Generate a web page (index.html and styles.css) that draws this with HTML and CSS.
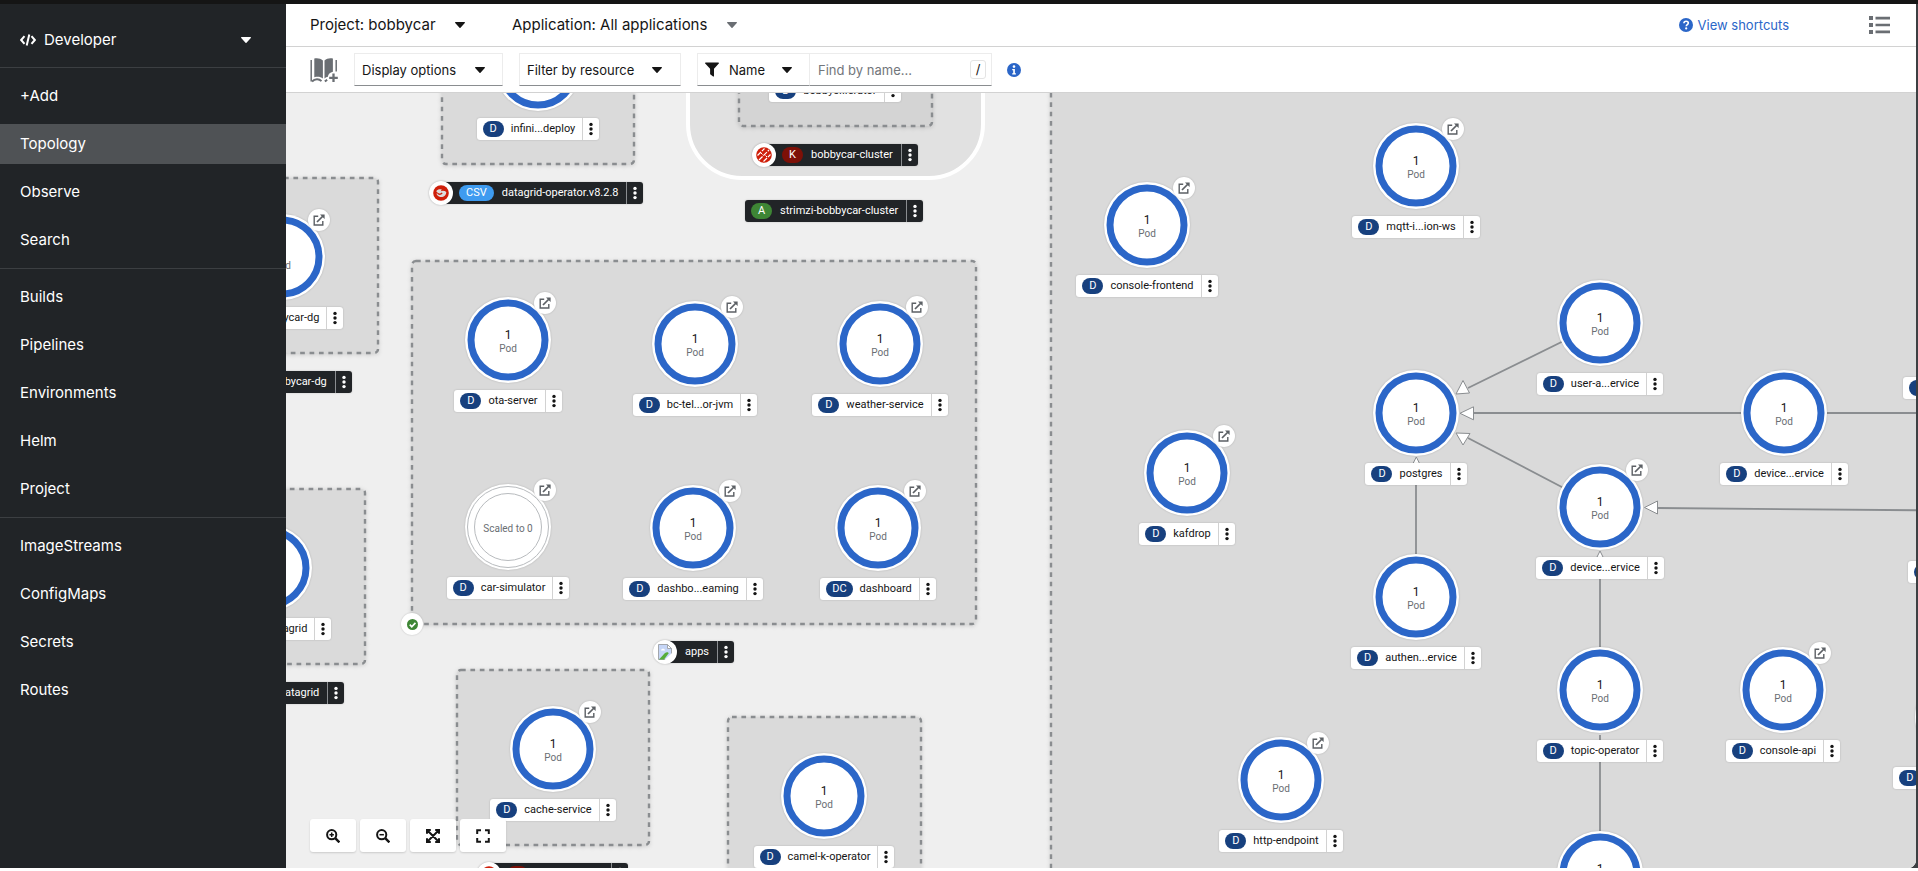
FILE: index.html
```html
<!DOCTYPE html>
<html lang="en">
<head>
<meta charset="utf-8">
<title>Topology</title>
<link rel="stylesheet" href="styles.css">
</head>
<body>
<svg class="sprite" aria-hidden="true">
  <symbol id="i-caret" viewBox="0 0 10 6"><path d="M.6 0h8.8c.5 0 .8.6.4 1L5.5 5.7a.7.7 0 0 1-1 0L.2 1C-.2.6.1 0 .6 0z"/></symbol>
  <symbol id="i-open" viewBox="0 0 12 12"><path d="M5.200 2.200H1.200v8.800h8.600V7" fill="none" stroke="currentColor" stroke-width="1.400"/><path d="M4 8l6-6" stroke="currentColor" stroke-width="1.700"/><path d="M7 .4h4.600V5z"/></symbol>
  <symbol id="i-kebab" viewBox="0 0 4 14"><circle cx="2" cy="2.400" r="1.700"/><circle cx="2" cy="7" r="1.700"/><circle cx="2" cy="11.600" r="1.700"/></symbol>
</svg>
<div class="titlebar"></div>
<div class="window">
  <nav class="sidebar" aria-label="Main">
    <div class="perspective">
      <svg class="perspective-icon" viewBox="0 0 16 12"><path d="M4.500 2.200L1.200 6l3.300 3.800M11.500 2.200L14.800 6l-3.300 3.800M9.300.6L6.700 11.400" fill="none" stroke="currentColor" stroke-width="2"/></svg>
      <select aria-label="Perspective"><option>Developer</option></select>
      <svg class="caret"><use href="#i-caret"/></svg>
    </div>
    <div class="nav-group">
      <a href="#add">+Add</a>
      <a href="#topology" class="current" aria-current="page">Topology</a>
      <a href="#observe">Observe</a>
      <a href="#search">Search</a>
    </div>
    <div class="nav-group">
      <a href="#builds">Builds</a>
      <a href="#pipelines">Pipelines</a>
      <a href="#environments">Environments</a>
      <a href="#helm">Helm</a>
      <a href="#project">Project</a>
    </div>
    <div class="nav-group">
      <a href="#imagestreams">ImageStreams</a>
      <a href="#configmaps">ConfigMaps</a>
      <a href="#secrets">Secrets</a>
      <a href="#routes">Routes</a>
    </div>
  </nav>
  <main class="content">
    <header class="context-bar">
      <div class="context-picker">
        <select aria-label="Project"><option>Project: bobbycar</option></select>
        <svg class="caret"><use href="#i-caret"/></svg>
      </div>
      <div class="context-picker muted">
        <select aria-label="Application"><option>Application: All applications</option></select>
        <svg class="caret"><use href="#i-caret"/></svg>
      </div>
      <a class="shortcuts" href="#shortcuts">
        <svg viewBox="0 0 14 14"><circle cx="7" cy="7" r="7" fill="currentColor"/><path d="M4.900 5.300C5 3.900 5.900 3.200 7.100 3.200c1.300 0 2.200.8 2.200 1.900 0 1.600-2 1.600-2 3.100" fill="none" stroke="#fff" stroke-width="1.600"/><circle cx="7.200" cy="10.400" r="1.100" fill="#fff"/></svg>
        View shortcuts</a>
      <button class="list-view" aria-label="List view">
        <svg viewBox="0 0 21 18"><path d="M0 0h4v4H0zM0 7h4v4H0zM0 14h4v4H0zM6.500 .8H21v2.600H6.500zM6.500 7.700H21v2.600H6.500zM6.500 14.600H21v2.600H6.500z"/></svg>
      </button>
    </header>
    <div class="filter-bar">
      <button class="catalog" aria-label="Quick search">
        <svg viewBox="0 0 28 26"><path d="M4.300 1.500C7.500.9 10.600 1.400 12.900 3.400v18C10.700 19.700 7.500 19.300 4.300 20.200zM22.900 1.500C19.700.9 16.700 1.400 14.500 3.400v18c1-.8 2.200-1.300 3.400-1.600.2-2.300 2.100-4.600 5-5z"/><path d="M1.200 3v21.500M26.200 3v11.500" fill="none" stroke="currentColor" stroke-width="1.500"/><path d="M2 24.500c3-2.900 7-2.900 9.500-.4M14.800 24.400l2.400-1.500" fill="none" stroke="currentColor" stroke-width="2"/><path d="M23.500 16.500v8.600M19.200 20.800h8.600" stroke="currentColor" stroke-width="2.300"/></svg>
      </button>
      <button class="box display-options">Display options <svg class="caret"><use href="#i-caret"/></svg></button>
      <div class="box resource-filter">
        <select aria-label="Filter by resource"><option>Filter by resource</option></select>
        <svg class="caret"><use href="#i-caret"/></svg>
      </div>
      <div class="search-group">
        <div class="box name-filter">
          <svg class="funnel" viewBox="0 0 14 14"><path d="M.7 0h12.600c.6 0 .9.7.5 1.100L9 6.200v7.300c0 .5-.5.7-.9.400L5.500 12a.8.800 0 0 1-.4-.6V6.200L.2 1.100C-.2.7.1 0 .7 0z"/></svg>
          <select aria-label="Filter type"><option>Name</option></select>
          <svg class="caret"><use href="#i-caret"/></svg>
        </div>
        <div class="box search">
          <input type="text" placeholder="Find by name..." aria-label="Find by name">
          <kbd>/</kbd>
        </div>
      </div>
      <button class="info" aria-label="Search help">
        <svg viewBox="0 0 14 14"><circle cx="7" cy="7" r="7"/><circle cx="7" cy="3.600" r="1.300" fill="#fff"/><path d="M5.200 6h2.700v4.200h1v1.300H5.200v-1.300h1V7.300h-1z" fill="#fff"/></svg>
      </button>
    </div>
    <section class="topology" aria-label="Topology graph">
      <svg class="graph-shapes">
        <g transform="translate(-286 -93)">
          <rect class="app-group" x="688" y="-60" width="295" height="238" rx="54"/>
          <g class="group">
            <rect x="442" y="-20" width="192" height="184" rx="4"/>
            <rect class="nested" x="739" y="-20" width="193" height="146" rx="4"/>
            <rect x="186" y="178" width="192" height="175" rx="4"/>
            <rect x="173" y="489" width="192" height="175" rx="4"/>
            <rect x="412" y="261" width="564" height="363" rx="4"/>
            <rect x="457" y="670" width="192" height="175" rx="4"/>
            <rect x="728" y="717" width="193" height="200" rx="4"/>
            <rect x="1051" y="-20" width="1000" height="1000" rx="4"/>
          </g>
          <g class="edges">
            <path d="M1600 323L1468 388M1600 507L1468 438M1784 413H1473M1784 413H2000M1416 597V470M2000 511L1657 508M1600 690V564M1600 874V735"/>
            <path class="arrow" d="M1456 394l7-13.500 6.500 12.500zM1460 413.300l13.500-6.500v13zM1456 433l14 .5-7 11.500zM1644.500 507.500l13-6.500v13zM1416.300 457l6.500 13h-13zM1600 551l6.500 13h-13z"/>
          </g>
        </g>
      </svg>
      <div class="world" id="world"></div>
      <div class="zoom-controls">
        <button aria-label="Zoom in"><svg viewBox="0 0 14 14"><circle cx="5.700" cy="5.700" r="4.600"/><path d="M9.200 9.200l4.200 4.200" stroke-width="2.400"/><path d="M5.700 3.500v4.400M3.500 5.700h4.400" stroke-width="1.500"/></svg></button>
        <button aria-label="Zoom out"><svg viewBox="0 0 14 14"><circle cx="5.700" cy="5.700" r="4.600"/><path d="M9.200 9.200l4.200 4.200" stroke-width="2.400"/><path d="M3.500 5.700h4.400" stroke-width="1.500"/></svg></button>
        <button aria-label="Fit to screen"><svg viewBox="0 0 14 14"><path d="M2 2l10 10M12 2L2 12M1 4.800V1h3.800M9.200 1H13v3.800M13 9.200V13H9.200M4.800 13H1V9.200"/></svg></button>
        <button aria-label="Reset view"><svg viewBox="0 0 14 14"><path d="M1.200 5V1.200H5M9 1.200h3.800V5M12.800 9v3.800H9M5 12.800H1.200V9"/></svg></button>
      </div>
    </section>
  </main>
</div>
<script src="app.js"></script>
</body>
</html>
```
FILE: styles.css
```css
* { box-sizing: border-box; }
body {
  margin: 0;
  height: 100vh;
  display: flex;
  flex-direction: column;
  padding-bottom: 3px;
  background: #fff;
  color: #151515;
  font-family: Inter, "Noto Sans", "Liberation Sans", sans-serif;
  font-size: 16px;
  line-height: 24px;
  overflow: hidden;
}
button, select, input {
  font: inherit;
  color: inherit;
  background: none;
  border: 0;
  margin: 0;
  padding: 0;
  outline: 0;
  appearance: none;
}
a { color: inherit; text-decoration: none; }
svg { display: block; fill: currentColor; }
.sprite { position: absolute; width: 0; height: 0; }
.caret { width: 10px; height: 6px; flex: none; pointer-events: none; }

.titlebar { height: 4px; flex: none; background: #151515; }
.window {
  flex: 1;
  min-height: 0;
  display: flex;
  padding-right: 2px;
  background: #3c3f42;
}
.sidebar {
  width: 286px;
  flex: none;
  background: #212427;
  color: #fff;
  font-size: 15px;
}
.perspective {
  height: 64px;
  display: flex;
  align-items: center;
  gap: 8px;
  padding: 8px 35px 0 20px;
  border-bottom: 1px solid #3c3f42;
}
.perspective-icon { width: 16px; height: 12px; flex: none; }
.perspective select { flex: 1; min-width: 0; }
.nav-group {
  display: flex;
  flex-direction: column;
  gap: 8px;
  padding: 8px 0;
}
.nav-group + .nav-group { border-top: 1px solid #3c3f42; }
.nav-group a { padding: 8px 20px; }
.nav-group .current { background: #4f5255; }

.content {
  flex: 1;
  min-width: 0;
  display: flex;
  flex-direction: column;
  background: #fff;
  border-radius: 0 0 8px 0;
  overflow: hidden;
}
.context-bar {
  height: 43px;
  flex: none;
  display: flex;
  align-items: center;
  padding: 0 26px 0 24px;
  border-bottom: 1px solid #d2d2d2;
  font-size: 15px;
}
.context-picker { display: flex; align-items: center; gap: 19px; margin-right: 47px; }
.muted .caret { color: #6a6e73; }
.shortcuts {
  display: flex;
  align-items: center;
  gap: 5px;
  margin-left: auto;
  color: #2b66c8;
  font-size: 13px;
}
.shortcuts svg { width: 14px; height: 14px; }
.list-view { margin-left: 80px; color: #6a6e73; }
.list-view svg { width: 21px; height: 18px; }

.filter-bar {
  height: 46px;
  flex: none;
  display: flex;
  align-items: center;
  padding: 0 24px;
  border-bottom: 1px solid #d2d2d2;
  font-size: 13px;
}
.catalog { margin-right: 16px; color: #6a6e73; }
.catalog svg { width: 28px; height: 26px; }
.box {
  height: 33px;
  display: flex;
  align-items: center;
  border: 1px solid #ececec;
  border-bottom-color: #8a8d90;
}
.display-options { width: 149px; padding: 0 17px 0 7px; margin-right: 16px; justify-content: space-between; }
.resource-filter { width: 162px; padding: 0 18px 0 7px; margin-right: 16px; }
.resource-filter select, .name-filter select { flex: 1; min-width: 0; }
.search-group { display: flex; }
.name-filter { width: 113px; padding: 0 17px 0 7px; }
.funnel { width: 14px; height: 17px; margin-right: 10px; }
.search { width: 182px; padding: 0 5px 0 8px; border-left: 0; }
.search input { flex: 1; min-width: 0; }
.search input::placeholder { color: #72767b; opacity: 1; }
.search kbd {
  width: 16px;
  height: 19px;
  border: 1px solid #e4e4e4;
  border-radius: 3px;
  font: inherit;
  line-height: 17px;
  text-align: center;
}
.info { margin-left: 15px; color: #2b66c8; }
.info svg { width: 14px; height: 14px; }

.topology {
  flex: 1;
  min-height: 0;
  position: relative;
  overflow: hidden;
  background: #efefef;
}
.graph-shapes { position: absolute; inset: 0; width: 100%; height: 100%; }
.app-group { fill: #e1e1e1; stroke: #fff; stroke-width: 4; }
.group rect {
  fill: #dadada;
  stroke: #8a8d90;
  stroke-width: 2.4;
  stroke-dasharray: 4.7 4.7;
  filter: drop-shadow(0 1px 2px rgba(0, 0, 0, .15));
}
.group .nested { fill: #d4d4d4; }
.edges { fill: none; stroke: #8a8d90; stroke-width: 1.8; }
.edges .arrow { fill: #fff; stroke-width: 1; }

.world {
  position: absolute;
  left: -286px;
  top: -93px;
  font-family: Roboto, Inter, "Liberation Sans", sans-serif;
  font-size: 11px;
  line-height: 16px;
}
.node {
  position: absolute;
  width: 0;
  display: flex;
  flex-direction: column;
  align-items: center;
  gap: 7px;
}
.ring {
  position: relative;
  width: 86px;
  height: 86px;
  flex: none;
  border-radius: 50%;
  background: #fff;
  box-shadow: 0 0 2px rgba(0, 0, 0, .2);
}
.ring > svg { position: absolute; inset: 0; width: 86px; height: 86px; fill: none; }
.ring .donut { stroke: #2b66c8; stroke-width: 7; }
.ring .empty { stroke: #b8bbbe; stroke-width: 1; }
.count {
  position: absolute;
  inset: 0;
  display: flex;
  flex-direction: column;
  align-items: center;
  justify-content: center;
  padding-top: 3px;
  line-height: 13px;
  font-size: 12px;
}
.count small { font-size: 10px; color: #6a6e73; }
.open-url {
  position: absolute;
  left: 69px;
  top: -5px;
  width: 22px;
  height: 22px;
  display: grid;
  place-items: center;
  border-radius: 50%;
  background: #fff;
  color: #5c6065;
  box-shadow: 0 0 2px rgba(0, 0, 0, .2);
}
.open-url svg { width: 12px; height: 12px; }
.tag {
  height: 22px;
  flex: none;
  display: flex;
  align-items: center;
  white-space: nowrap;
  border-radius: 3px;
  background: #fff;
  box-shadow: 0 0 2px rgba(0, 0, 0, .2);
}
.badge {
  min-width: 21px;
  height: 16px;
  margin-left: 6px;
  padding: 0 6px;
  border-radius: 8px;
  background: #17407e;
  color: #fff;
  text-align: center;
}
.badge.csv { background: #3e9bf0; padding: 0 7px; }
.badge.k { background: #7d1007; }
.badge.a { background: #3e8635; }
.name { padding: 0 7px; }
.menu {
  width: 17px;
  height: 22px;
  display: grid;
  place-items: center;
  border-left: 1px solid #d2d2d2;
}
.menu svg { width: 4px; height: 14px; }
.free { position: absolute; }
.dark { background: #212427; color: #fff; }
.dark .name { padding: 0 8px; }
.dark .menu { border-color: #8a8d90; }
.with-icon { padding-left: 12px; }
.tag-icon {
  position: absolute;
  left: -12px;
  top: -1px;
  width: 24px;
  height: 24px;
  display: grid;
  place-items: center;
  border-radius: 50%;
  background: #fff;
  box-shadow: 0 0 2px rgba(0, 0, 0, .3);
}
.tag-icon svg { width: 16px; height: 16px; }
.status {
  position: absolute;
  width: 22px;
  height: 22px;
  display: grid;
  place-items: center;
  border-radius: 50%;
  background: #fff;
  box-shadow: 0 0 2px rgba(0, 0, 0, .2);
}
.status svg { width: 11px; height: 11px; }

.zoom-controls {
  position: absolute;
  left: 24px;
  bottom: 16px;
  display: flex;
  gap: 4px;
}
.zoom-controls button {
  width: 46px;
  height: 33px;
  display: grid;
  place-items: center;
  border-radius: 3px;
  background: #fff;
  box-shadow: 0 1px 2px rgba(0, 0, 0, .15);
}
.zoom-controls svg { width: 14px; height: 14px; fill: none; stroke: currentColor; stroke-width: 2; }
```
FILE: app.js
```js
// Workloads: centre x, centre y, name, options.
const nodes = [
  [538, 68, 'infini...deploy'],
  [282, 257, 'bobbycar-dg', { url: true, kind: 'SS' }],
  [269, 568, 'infinis...agrid', { kind: 'SS' }],
  [508, 340, 'ota-server', { url: true }],
  [695, 344, 'bc-tel...or-jvm', { url: true }],
  [880, 344, 'weather-service', { url: true }],
  [508, 527, 'car-simulator', { url: true, empty: true }],
  [693, 528, 'dashbo...eaming', { url: true }],
  [878, 528, 'dashboard', { url: true, kind: 'DC' }],
  [553, 749, 'cache-service', { url: true }],
  [824, 796, 'camel-k-operator'],
  [835, 30, 'bobbyc...erator'],
  [1147, 225, 'console-frontend', { url: true }],
  [1187, 473, 'kafdrop', { url: true }],
  [1281, 780, 'http-endpoint', { url: true }],
  [1416, 166, 'mqtt-i...ion-ws', { url: true }],
  [1600, 323, 'user-a...ervice'],
  [1416, 413, 'postgres'],
  [1784, 413, 'device...ervice'],
  [1600, 507, 'device...ervice', { url: true }],
  [1416, 597, 'authen...ervice'],
  [1600, 690, 'topic-operator'],
  [1783, 690, 'console-api', { url: true }],
  [1600, 874, 'zookeeper'],
  [1967, 327, 'device...ervice'],
  [1971, 511, 'bobbyc...ridge'],
  [1958, 717, 'entity-operator']
];

const icons = {
  datagrid: '<svg viewBox="0 0 16 16"><circle cx="8" cy="8" r="7.800" fill="#cf1f0a"/><path d="M3.200 6.200c1.500-2 3.800-2.400 5.600-1.600l-1 1.700c1.500-.9 3.800-.7 5.500.6-.2 3.600-3 5.700-6 5-2-.4-3.400-1.700-3.900-3.400l2.600.5z" fill="#ddd"/><path d="M5 8.600c1.500 1 3 .8 4.200-.8" stroke="#cf1f0a" stroke-width="1.300" fill="none"/></svg>',
  kafka: '<svg viewBox="0 0 16 16"><circle cx="8" cy="8" r="7.800" fill="#cf1f0a"/><path d="M1.500 8.500L8.500 1.500M3 13L13 3M7.500 14.500L14.500 7.500" stroke="#fff" stroke-width="1.200" stroke-dasharray="5 1.200"/><path d="M5 6l1.500 1.500M9.500 8.500L11 10" stroke="#fff" stroke-width="1"/></svg>',
  image: '<svg viewBox="0 0 16 16"><path d="M1.500.5h9l4 4v11h-13z" fill="#c6d6f7" stroke="#a3a7ad"/><path d="M10.500.5v4h4z" fill="#fff" stroke="#a3a7ad"/><path d="M4 6.500c0-2.500 4-2.500 4 0z" fill="#fff"/><path d="M2 15.500l6-6.500c2-1.500 4-.5 3.500.5l-4.500 6z" fill="#57ad3a"/><path d="M7.500 16l7.500-7v7z" fill="#fff"/></svg>'
};

// Group and operator labels: left x, top y, name, options.
const labels = [
  [441, 182, 'datagrid-operator.v8.2.8', { icon: 'datagrid', badge: 'CSV' }],
  [764, 144, 'bobbycar-cluster', { icon: 'kafka', badge: 'K' }],
  [745, 200, 'strimzi-bobbycar-cluster', { badge: 'A' }],
  [665, 641, 'apps', { icon: 'image' }],
  [231, 371, 'bobbycar-dg', { badge: 'I' }],
  [230, 682, 'datagrid', { badge: 'CSV' }],
  [489, 863, 'cache-service', { icon: 'datagrid', badge: 'K' }]
];

const menu = '<button class="menu" aria-label="Actions"><svg><use href="#i-kebab"/></svg></button>';
const world = document.getElementById('world');

function add(className, x, y, html) {
  const el = document.createElement('div');
  el.className = className;
  el.style.left = x + 'px';
  el.style.top = y + 'px';
  el.innerHTML = html;
  world.append(el);
}

for (const [x, y, name, o = {}] of nodes) {
  const ring = o.empty
    ? '<svg viewBox="0 0 86 86" class="empty"><circle cx="43" cy="43" r="40.500"/><circle cx="43" cy="43" r="33.500"/></svg><div class="count"><small>Scaled to 0</small></div>'
    : '<svg viewBox="0 0 86 86" class="donut"><circle cx="43" cy="43" r="37"/></svg><div class="count">1<small>Pod</small></div>';
  const url = o.url ? '<a class="open-url" href="#open" aria-label="Open URL"><svg><use href="#i-open"/></svg></a>' : '';
  add('node', x, y - 43,
    `<div class="ring">${ring}${url}</div>` +
    `<div class="tag"><span class="badge">${o.kind || 'D'}</span><span class="name">${name}</span>${menu}</div>`);
}

for (const [x, y, name, o] of labels) {
  const icon = o.icon ? `<span class="tag-icon">${icons[o.icon]}</span>` : '';
  const badge = o.badge ? `<span class="badge ${o.badge.toLowerCase()}">${o.badge}</span>` : '';
  add('free tag dark' + (o.icon ? ' with-icon' : ''), x, y,
    `${icon}${badge}<span class="name">${name}</span>${menu}`);
}

add('status', 401, 613, '<svg viewBox="0 0 12 12"><circle cx="6" cy="6" r="6" fill="#3e8635"/><path d="M3 6.200l2.200 2.200L9.200 4.200" fill="none" stroke="#fff" stroke-width="1.800"/></svg>');
```
